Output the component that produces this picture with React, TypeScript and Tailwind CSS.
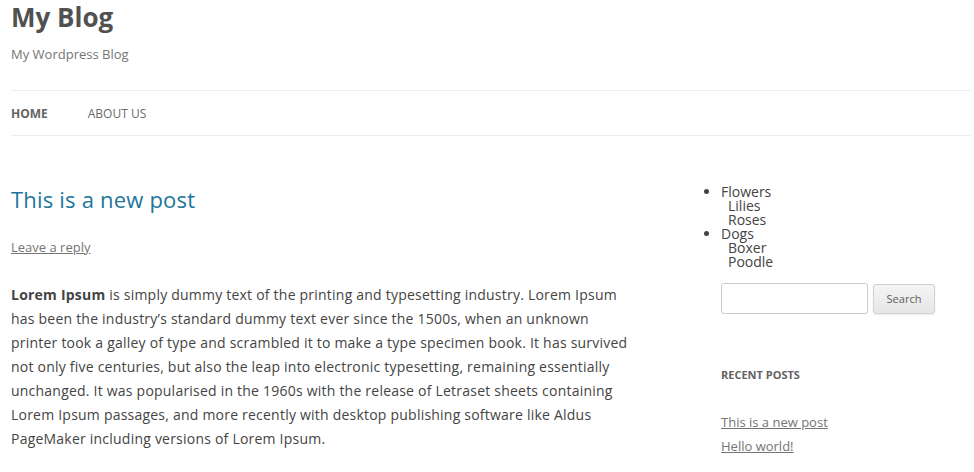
import React from "react";

const categories = [
  { name: "Flowers", children: ["Lilies", "Roses"] },
  { name: "Dogs", children: ["Boxer", "Poodle"] },
];

const App: React.FC = () => {
  return (
    <div className="bg-white min-h-[472px] text-[#444] font-['Open_Sans',sans-serif]">
      <div className="ml-[11px] w-[960px]">
        <header>
          <h1 className="text-[26px] leading-[34px] font-bold text-[#515151]">My Blog</h1>
          <p className="mt-[10px] text-[13px] leading-[20px] text-[#757575]">My Wordpress Blog</p>
          <nav className="mt-[26px] border-t border-b border-[#ededed] h-[46px] pt-[1px] flex items-start">
            <a className="text-[12px] leading-[44px] uppercase font-bold text-[#636363] mr-[40px]">Home</a>
            <a className="text-[12px] leading-[44px] uppercase text-[#6a6a6a]">About Us</a>
          </nav>
        </header>

        <div className="flex justify-between">
          <main className="w-[625px] pt-[50px]">
            <h2 className="text-[22px] leading-[26px] tracking-[0.2px] text-[#21759b]">This is a new post</h2>
            <a className="block mt-[25px] text-[13px] leading-[20px] text-[#757575] underline">Leave a reply</a>
            <p className="mt-[26px] text-[14px] leading-[24px] tracking-[0.22px]">
              <strong className="font-bold">Lorem Ipsum</strong> is simply dummy text of the printing and typesetting
              industry. Lorem Ipsum has been the industry’s standard dummy text ever since the 1500s, when an unknown
              printer took a galley of type and scrambled it to make a type specimen book. It has survived not only five
              centuries, but also the leap into electronic typesetting, remaining essentially unchanged. It was
              popularised in the 1960s with the release of Letraset sheets containing Lorem Ipsum passages, and more
              recently with desktop publishing software like Aldus PageMaker including versions of Lorem Ipsum.
            </p>
          </main>

          <aside className="w-[250px] pt-[49px]">
            <ul className="list-disc text-[14px] leading-[14px] text-[#444]">
              {categories.map((cat) => (
                <li key={cat.name}>
                  {cat.name}
                  <ul className="list-none pl-[7px]">
                    {cat.children.map((c) => (
                      <li key={c}>{c}</li>
                    ))}
                  </ul>
                </li>
              ))}
            </ul>

            <div className="mt-[14px] flex items-center gap-[5px]">
              <input
                type="text"
                className="w-[147px] h-[31px] border border-[#ccc] rounded-[3px] bg-white outline-none"
              />
              <button className="w-[62px] h-[30px] pt-[1px] text-[11px] text-[#5e5e5e] border border-[#d2d2d2] rounded-[3px] bg-gradient-to-b from-[#f4f4f4] to-[#e6e6e6] shadow-[0_1px_2px_rgba(64,64,64,0.1)]">
                Search
              </button>
            </div>

            <h3 className="mt-[51px] text-[11px] leading-[20px] font-bold uppercase text-[#636363]">Recent Posts</h3>
            <ul className="mt-[25px] text-[13px] leading-[24px]">
              <li>
                <a className="text-[#757575] underline">This is a new post</a>
              </li>
              <li>
                <a className="text-[#757575] underline">Hello world!</a>
              </li>
            </ul>
          </aside>
        </div>
      </div>
    </div>
  );
};

export default App;
